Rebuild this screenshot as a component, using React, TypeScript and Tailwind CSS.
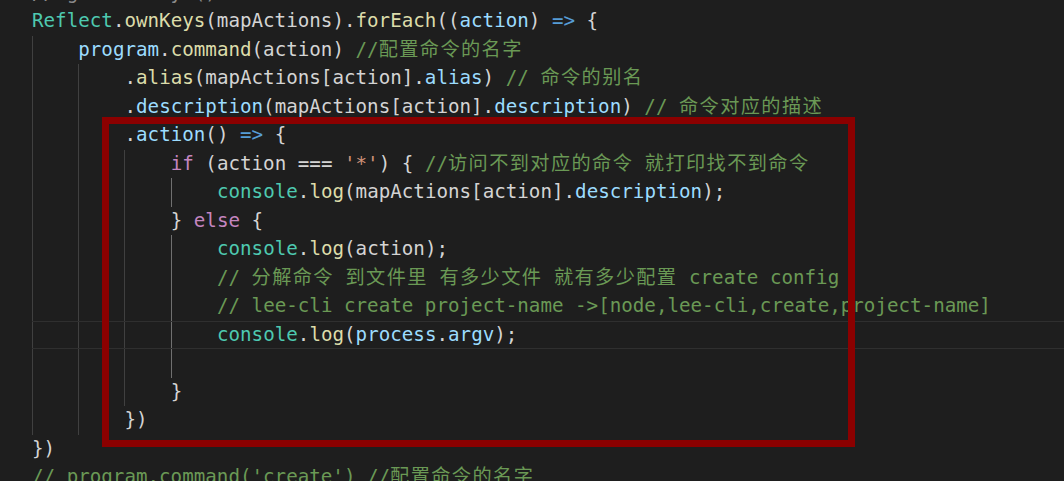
import React from 'react'

// token colour -> class (written out in full so tailwind picks them up)
const COLOR: Record<string, string> = {
  w: 'text-[#d4d4d4]',
  b: 'text-[#9cdcfe]',
  y: 'text-[#dcdcaa]',
  t: 'text-[#4ec9b0]',
  k: 'text-[#569cd6]',
  p: 'text-[#c586c0]',
  s: 'text-[#ce9178]',
  g: 'text-[#6a9955]',
  d: 'text-[#8a8a8a]',
}

type Line = { guides: number; tokens: [string, string][]; active?: boolean }

const LINES: Line[] = [
  { guides: 0, tokens: [['d', '// gather keys()']] },
  {
    guides: 0,
    tokens: [
      ['t', 'Reflect'],
      ['w', '.'],
      ['y', 'ownKeys'],
      ['w', '(mapActions).'],
      ['y', 'forEach'],
      ['w', '(('],
      ['b', 'action'],
      ['w', ') '],
      ['k', '=>'],
      ['w', ' {'],
    ],
  },
  {
    guides: 1,
    tokens: [
      ['b', 'program'],
      ['w', '.'],
      ['y', 'command'],
      ['w', '(action) '],
      ['g', '//配置命令的名字'],
    ],
  },
  {
    guides: 2,
    tokens: [
      ['w', '.'],
      ['y', 'alias'],
      ['w', '(mapActions[action].'],
      ['b', 'alias'],
      ['w', ') '],
      ['g', '// 命令的别名'],
    ],
  },
  {
    guides: 2,
    tokens: [
      ['w', '.'],
      ['b', 'description'],
      ['w', '(mapActions[action].'],
      ['b', 'description'],
      ['w', ') '],
      ['g', '// 命令对应的描述'],
    ],
  },
  {
    guides: 2,
    tokens: [
      ['w', '.'],
      ['b', 'action'],
      ['w', '() '],
      ['k', '=>'],
      ['w', ' {'],
    ],
  },
  {
    guides: 3,
    tokens: [
      ['p', 'if'],
      ['w', ' (action === '],
      ['s', "'*'"],
      ['w', ') { '],
      ['g', '//访问不到对应的命令 就打印找不到命令'],
    ],
  },
  {
    guides: 4,
    tokens: [
      ['t', 'console'],
      ['w', '.'],
      ['y', 'log'],
      ['w', '(mapActions[action].'],
      ['b', 'description'],
      ['w', ');'],
    ],
  },
  {
    guides: 3,
    tokens: [
      ['w', '} '],
      ['p', 'else'],
      ['w', ' {'],
    ],
  },
  {
    guides: 4,
    tokens: [
      ['t', 'console'],
      ['w', '.'],
      ['y', 'log'],
      ['w', '(action);'],
    ],
  },
  { guides: 4, tokens: [['g', '// 分解命令 到文件里 有多少文件 就有多少配置 create config']] },
  { guides: 4, tokens: [['g', '// lee-cli create project-name ->[node,lee-cli,create,project-name]']] },
  {
    guides: 4,
    active: true,
    tokens: [
      ['t', 'console'],
      ['w', '.'],
      ['y', 'log'],
      ['w', '('],
      ['b', 'process'],
      ['w', '.'],
      ['b', 'argv'],
      ['w', ');'],
    ],
  },
  { guides: 4, tokens: [] },
  { guides: 3, tokens: [['w', '}']] },
  { guides: 2, tokens: [['w', '})']] },
  { guides: 0, tokens: [['w', '})']] },
  { guides: 0, tokens: [['g', "// program.command('create') //配置命令的名字"]] },
]

//-----------------------
//  CJK runs get a little extra spacing to match the editor's wide glyphs
//-----------------------
const Text = ({ value }: { value: string }) => (
  <>
    {value.split(/([\u4e00-\u9fff]+)/).map((part, i) =>
      /[\u4e00-\u9fff]/.test(part) ? (
        <span key={i} className="tracking-[1.4px]">
          {part}
        </span>
      ) : (
        part
      )
    )}
  </>
)

const CodeLine = ({ line }: { line: Line }) => (
  <div className="h-[28.5px] pl-[32px]">
    <div
      className={`flex items-stretch h-full whitespace-pre ${
        line.active ? 'border-y border-[#2f2f2f]' : ''
      }`}
    >
      {Array.from({ length: line.guides }).map((_, i) => (
        <span
          key={i}
          className={`w-[46.24px] shrink-0 border-l ${i === 3 ? 'border-[#707070]' : 'border-[#404040]'}`}
        />
      ))}
      <span className="flex items-center">
        {line.tokens.map(([c, v], i) => (
          <span key={i} className={COLOR[c]}>
            <Text value={v} />
          </span>
        ))}
      </span>
    </div>
  </div>
)

export default function App() {
  //-----------------------
  //  RENDER
  //-----------------------
  return (
    <div className="relative w-[1064px] h-[481px] overflow-hidden bg-[#1e1e1e] font-['DejaVu_Sans_Mono','Noto_Sans_CJK_SC',monospace] text-[19.2px] leading-[28.5px] text-[#d4d4d4]">
      <div className="-mt-[21.5px]">
        {LINES.map((line, i) => (
          <CodeLine key={i} line={line} />
        ))}
      </div>
      {/* red annotation box */}
      <div className="absolute left-[102px] top-[117px] w-[753px] h-[330px] border-[7px] border-[#8b0000]" />
    </div>
  )
}
